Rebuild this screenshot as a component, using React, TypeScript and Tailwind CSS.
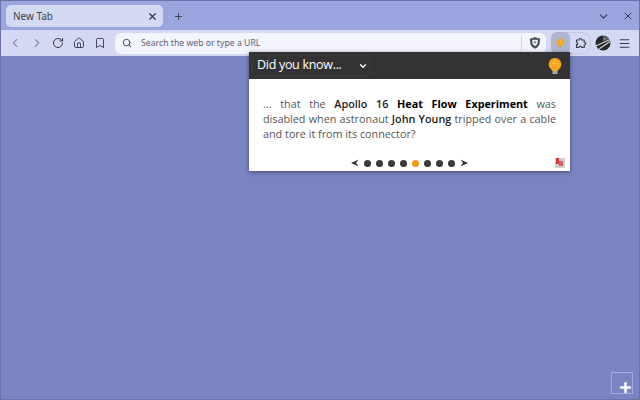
import { ChevronDown, ChevronLeft, ChevronRight, RotateCw, House, Bookmark, Search, X, Plus, Menu } from "lucide-react";

function Bulb({ size }: { size: number }) {
  return (
    <svg width={size} height={size} viewBox="0 0 20 20">
      <path d="M10 1a7 7 0 0 0-4.6 12.2c.9.8 1.4 1.6 1.5 2.3h6.2c.1-.7.6-1.5 1.5-2.3A7 7 0 0 0 10 1z" fill="#f9a61a" />
      <path d="M10 3v8M6.5 7h7" stroke="#f7c04f" strokeWidth="1" />
      <rect x="7.2" y="15.5" width="5.6" height="3.5" rx="0.8" fill="#a8a8a8" />
    </svg>
  );
}

function Globe() {
  return (
    <svg width="16" height="16" viewBox="0 0 16 16">
      <circle cx="8" cy="8" r="7.5" fill="#26262b" />
      <path d="M0.8 11 L15 4.5 M4 14 L15 6.5" stroke="#d8d8e0" strokeWidth="1.1" fill="none" />
      <path d="M8 1 Q12 1 14 4 L8 6 Z" fill="#6b6b72" />
    </svg>
  );
}

function Shield() {
  return (
    <svg width="12" height="14" viewBox="0 0 14 15">
      <path d="M1 2.5 L7 .8 L13 2.5 L12.3 9 Q11 12.5 7 14.3 Q3 12.5 1.7 9 Z" fill="#444955" />
      <path d="M3.6 3.8 H10.4 L9.9 8.6 L7 11.4 L4.1 8.6 Z" fill="#e9ebf5" />
      <path d="M5.4 6 H8.6 L7 8.2 Z" fill="#444955" />
    </svg>
  );
}

function PuzzleIcon() {
  return (
    <svg width="12" height="12" viewBox="0 0 12 12" fill="none" stroke="#34384a" strokeWidth="1.1" strokeLinejoin="round">
      <path d="M1.5 3 H4 C3.8 1 7 1 6.8 3 H9.2 V5.2 C11.2 5 11.2 8 9.2 7.8 V10.5 H6.8 C7 8.8 4 8.8 4 10.5 H1.5 V7.6 C3 7.8 3 5 1.5 5.2 Z" />
    </svg>
  );
}

function Arrow({ flip }: { flip?: boolean }) {
  return (
    <svg width="8" height="8" viewBox="0 0 8 8" className={flip ? "rotate-180" : ""}>
      <path d="M0 4 L7.5 .5 L5 4 L7.5 7.5 Z" fill="#333333" />
    </svg>
  );
}

const dots = [0, 1, 2, 3, 4, 5, 6, 7];

export default function App() {
  return (
    <div className="relative flex h-[400px] w-[640px] flex-col overflow-hidden border border-[#6a72a8] bg-[#7a84c3] font-['Noto_Sans',sans-serif]">
      <div className="flex h-[29px] items-center bg-[#9aa6dd] pl-[5px] pt-px">
        <div className="flex h-[22px] w-[157px] items-center justify-between rounded-[5px] bg-[#d3d8f3] pl-[7px] pr-[5px] text-[10px] text-[#3c3f4e]">
          <span>New Tab</span>
          <X size={11} strokeWidth={2.5} className="text-[#2f3240]" />
        </div>
        <Plus size={11} strokeWidth={2} className="ml-[10px] text-[#3a3f55]" />
        <div className="flex-1" />
        <ChevronDown size={13} strokeWidth={2} className="mr-[12px] text-[#353a52]" />
        <X size={12} strokeWidth={2} className="mr-[5px] text-[#353a52]" />
      </div>
      <div className="flex h-[26px] items-center bg-[#d3d8f3] pl-[7px] pr-[8px]">
        <ChevronLeft size={14} className="text-[#8c91ae]" />
        <ChevronRight size={14} className="ml-[8px] text-[#8c91ae]" />
        <RotateCw size={12} strokeWidth={2} className="ml-[8px] text-[#34384a]" />
        <House size={12} strokeWidth={1.8} className="ml-[9px] text-[#34384a]" />
        <Bookmark size={12} strokeWidth={1.8} className="ml-[9px] text-[#34384a]" />
        <div className="ml-[9px] flex h-[21px] w-[431px] items-center rounded-[6px] bg-[#f4f5fc] pl-[7px] pr-[5px]">
          <Search size={10} strokeWidth={2.2} className="text-[#3e4154]" />
          <span className="ml-[9px] pt-[2px] text-[8.7px] text-[#5f6272]">Search the web or type a URL</span>
          <div className="flex-1" />
          <div className="h-[15px] w-px bg-[#cfd2e2]" />
          <div className="ml-[7px]"><Shield /></div>
        </div>
        <div className="ml-[5px] flex h-[22px] w-[40px] items-center rounded-[9px] border border-[#c2c7e2]">
          <div className="-ml-px flex h-[22px] w-[19px] items-center justify-center rounded-[6px] bg-[#b0b5cf]">
            <Bulb size={11} />
          </div>
          <span className="ml-[5px]"><PuzzleIcon /></span>
        </div>
        <div className="ml-[4px]"><Globe /></div>
        <Menu size={13} strokeWidth={2} className="ml-[7px] text-[#34384a]" />
      </div>
      <div className="relative flex-1 bg-[#7a84c3]">
        <div className="absolute bottom-[5px] right-[6px] h-[22px] w-[22px] border border-[#a2aada]">
          <Plus size={15} strokeWidth={4} className="absolute bottom-[-2px] right-[-1px] text-white" />
        </div>
      </div>
      <div className="absolute left-[248px] top-[51px] w-[321px] bg-white shadow-[0_1px_4px_rgba(30,30,60,0.6)] font-['Open_Sans',sans-serif]">
        <div className="flex h-[27px] items-center justify-between bg-[#333333] pl-[3px] pr-[6px]">
          <div className="flex h-[21px] w-[118px] items-center justify-between rounded-[3px] border border-[#3c3c3c] pl-[4px] pr-px text-[12.5px] tracking-[-0.3px] text-white">
            <span>Did you know...</span>
            <ChevronDown size={10} strokeWidth={3} />
          </div>
          <Bulb size={18} />
        </div>
        <div className="h-[92px] relative">
          <div className="px-[14px] pt-[17px] text-[10.8px] leading-[15px] text-[#555555]">
            <p className="whitespace-nowrap text-justify [text-align-last:justify]">
              ... that the <b className="font-semibold text-[#1c1c1c]">Apollo 16</b> <b className="font-bold text-black">Heat Flow Experiment</b> was
            </p>
            <p className="whitespace-nowrap text-justify [text-align-last:justify]">
              disabled when astronaut <b className="font-semibold text-[#1c1c1c]">John Young</b> tripped over a cable
            </p>
            <p className="whitespace-nowrap">and tore it from its connector?</p>
          </div>
          <div className="absolute bottom-[4px] left-0 right-0 flex items-center justify-center">
            <span className="mr-[5px]"><Arrow /></span>
            <div className="flex gap-[5px]">
              {dots.map((d) => (
                <span key={d} className={d === 4 ? "h-[7px] w-[7px] rounded-full bg-[#f39c12]" : "h-[7px] w-[7px] rounded-full bg-[#3a3a3a]"} />
              ))}
            </div>
            <span className="ml-[5px]"><Arrow flip /></span>
          </div>
          <div className="absolute bottom-[3px] right-[5px] h-[10px] w-[10px] bg-[#cfcfcf]">
            <span className="absolute left-[1px] top-0 h-[6px] w-[3px] bg-[#d33]" />
            <span className="absolute left-[4px] top-[3px] h-[5px] w-[4px] bg-[#c66]" />
          </div>
        </div>
      </div>
    </div>
  );
}
